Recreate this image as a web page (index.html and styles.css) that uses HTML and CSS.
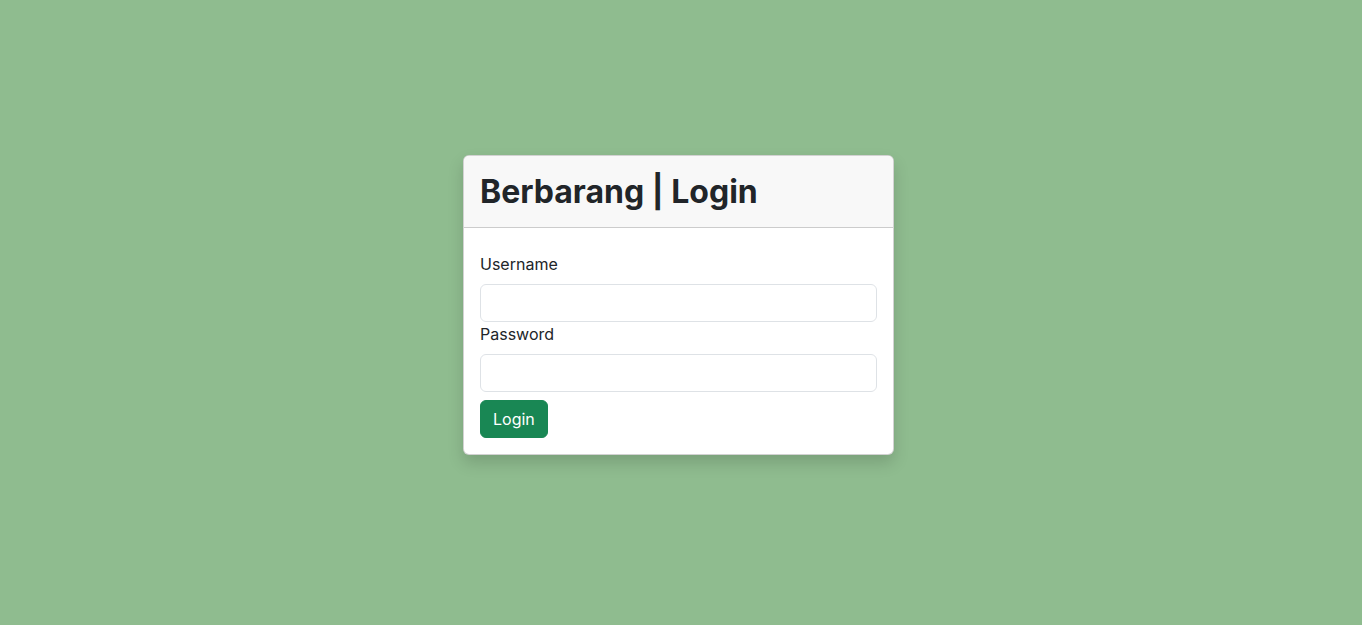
FILE: index.html
```html
<!DOCTYPE html>
<html lang="id">
<head>
<meta charset="utf-8">
<title>Berbarang | Login</title>
<link rel="stylesheet" href="styles.css">
</head>
<body>
<main class="page">
  <section class="card">
    <header class="card-header">
      <h2 class="title">Berbarang | Login</h2>
    </header>
    <form class="card-body">
      <label class="label" for="username">Username</label>
      <input class="input" id="username" type="text">
      <label class="label" for="password">Password</label>
      <input class="input" id="password" type="password">
      <button class="btn" type="button">Login</button>
    </form>
  </section>
</main>
</body>
</html>
```
FILE: styles.css
```css
* { box-sizing: border-box; }
html, body {
  margin: 0;
  height: 100%;
}
body {
  background: #8fbc8f;
  font-family: Inter, "Noto Sans", sans-serif;
  font-size: 16px;
  line-height: 1.5;
  color: #212529;
}
.page {
  display: flex;
  justify-content: center;
  align-items: flex-start;
  padding-top: 155px;
  padding-right: 5px;
}
.card {
  width: 431px;
  background: #fff;
  border: 1px solid rgba(0,0,0,0.175);
  border-radius: 6px;
  box-shadow: 0 8px 16px rgba(0,0,0,0.15);
  overflow: hidden;
}
.card-header {
  background: #f8f8f8;
  border-bottom: 1px solid rgba(0,0,0,0.175);
  padding: 16px 16px;
}
.title {
  margin: 0;
  font-size: 32px;
  font-weight: 700;
  line-height: 39px;
  color: #212529;
}
.card-body {
  display: flex;
  flex-direction: column;
  align-items: flex-start;
  padding: 24px 16px 16px;
  margin: 0;
}
.label {
  display: block;
  margin-bottom: 8px;
}
.input {
  display: block;
  width: 100%;
  height: 38px;
  padding: 6px 12px;
  font: inherit;
  color: #212529;
  background: #fff;
  border: 1px solid #dee2e6;
  border-radius: 6px;
  outline: none;
}
.btn {
  margin-top: 8px;
  font: inherit;
  color: #fff;
  background: #198754;
  border: 1px solid #198754;
  border-radius: 6px;
  padding: 6px 12px;
  line-height: 1.5;
  height: 38px;
  cursor: pointer;
}
```
